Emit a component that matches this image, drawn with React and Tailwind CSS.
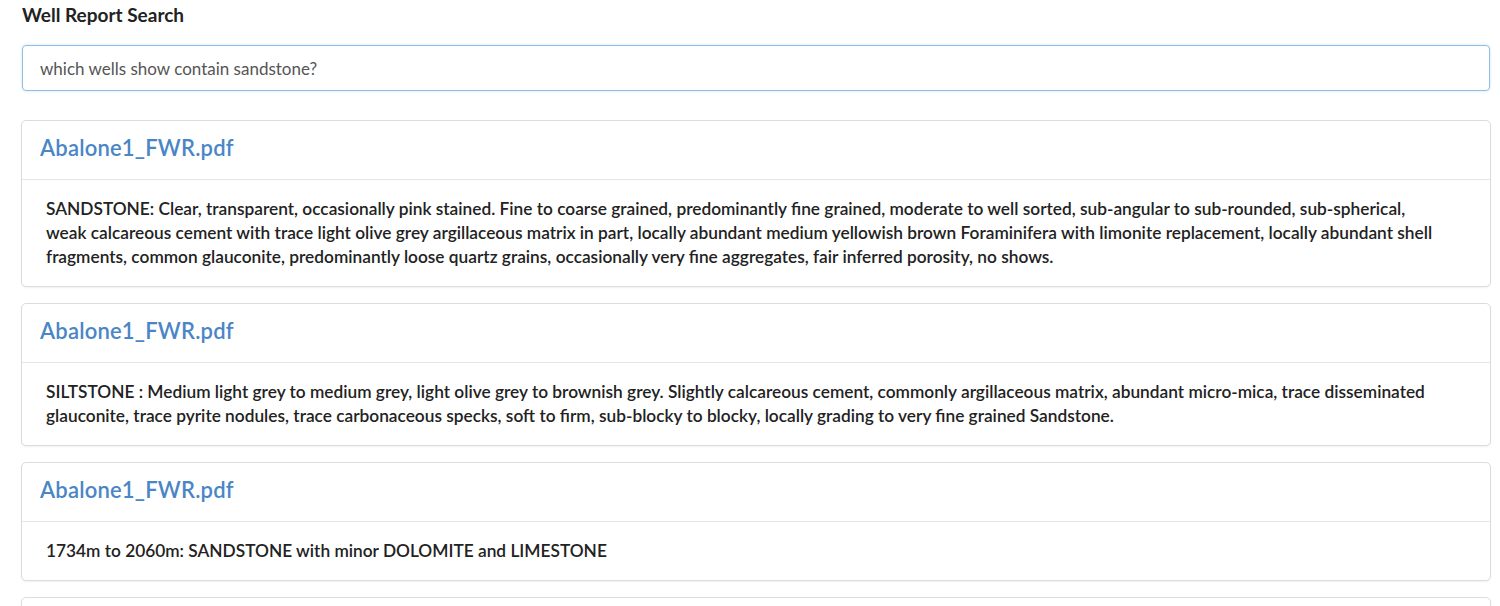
export default function App() {
  const results = [
    {
      title: "Abalone1_FWR.pdf",
      text: "SANDSTONE: Clear, transparent, occasionally pink stained. Fine to coarse grained, predominantly fine grained, moderate to well sorted, sub-angular to sub-rounded, sub-spherical, weak calcareous cement with trace light olive grey argillaceous matrix in part, locally abundant medium yellowish brown Foraminifera with limonite replacement, locally abundant shell fragments, common glauconite, predominantly loose quartz grains, occasionally very fine aggregates, fair inferred porosity, no shows.",
    },
    {
      title: "Abalone1_FWR.pdf",
      text: "SILTSTONE : Medium light grey to medium grey, light olive grey to brownish grey. Slightly calcareous cement, commonly argillaceous matrix, abundant micro-mica, trace disseminated glauconite, trace pyrite nodules, trace carbonaceous specks, soft to firm, sub-blocky to blocky, locally grading to very fine grained Sandstone.",
    },
    {
      title: "Abalone1_FWR.pdf",
      text: "1734m to 2060m: SANDSTONE with minor DOLOMITE and LIMESTONE",
    },
    {
      title: "Abalone1_FWR.pdf",
      text: "",
    },
  ];
  return (
    <div className="min-h-screen bg-white font-['Lato','Liberation_Sans',sans-serif] text-[#222]">
      <div className="pl-[21px] pr-[9px] pt-[4px]">
        <h1 className="text-[19px] font-bold leading-[22px] text-[#222] pl-px">Well Report Search</h1>
        <div className="mt-[19px] px-px">
          <input
            className="w-full h-[46px] rounded-[4px] border border-[#8fbde4] px-[17px] text-[17px] text-[#555] outline-none shadow-[0_0_3px_rgba(102,175,233,0.35)]"
            defaultValue="which wells show contain sandstone?"
          />
        </div>
        <div className="mt-[29px] flex flex-col gap-[16px]">
          {results.map((r, i) => (
            <div key={i} className="rounded-[5px] border border-[#dcdcdc] bg-white shadow-[0_1px_2px_rgba(0,0,0,0.06)]">
              <div className="h-[59px] flex items-center px-[18px] pb-[5px] border-b border-[#e6e6e6]">
                <span className="text-[22px] font-semibold tracking-[0.2px] text-[#4a86c6]">{r.title}</span>
              </div>
              <div className="pl-[24px] pr-[44px] py-[17px] text-[17.3px] leading-[24px] font-semibold text-[#222]">
                {r.text}
              </div>
            </div>
          ))}
        </div>
      </div>
    </div>
  );
}
